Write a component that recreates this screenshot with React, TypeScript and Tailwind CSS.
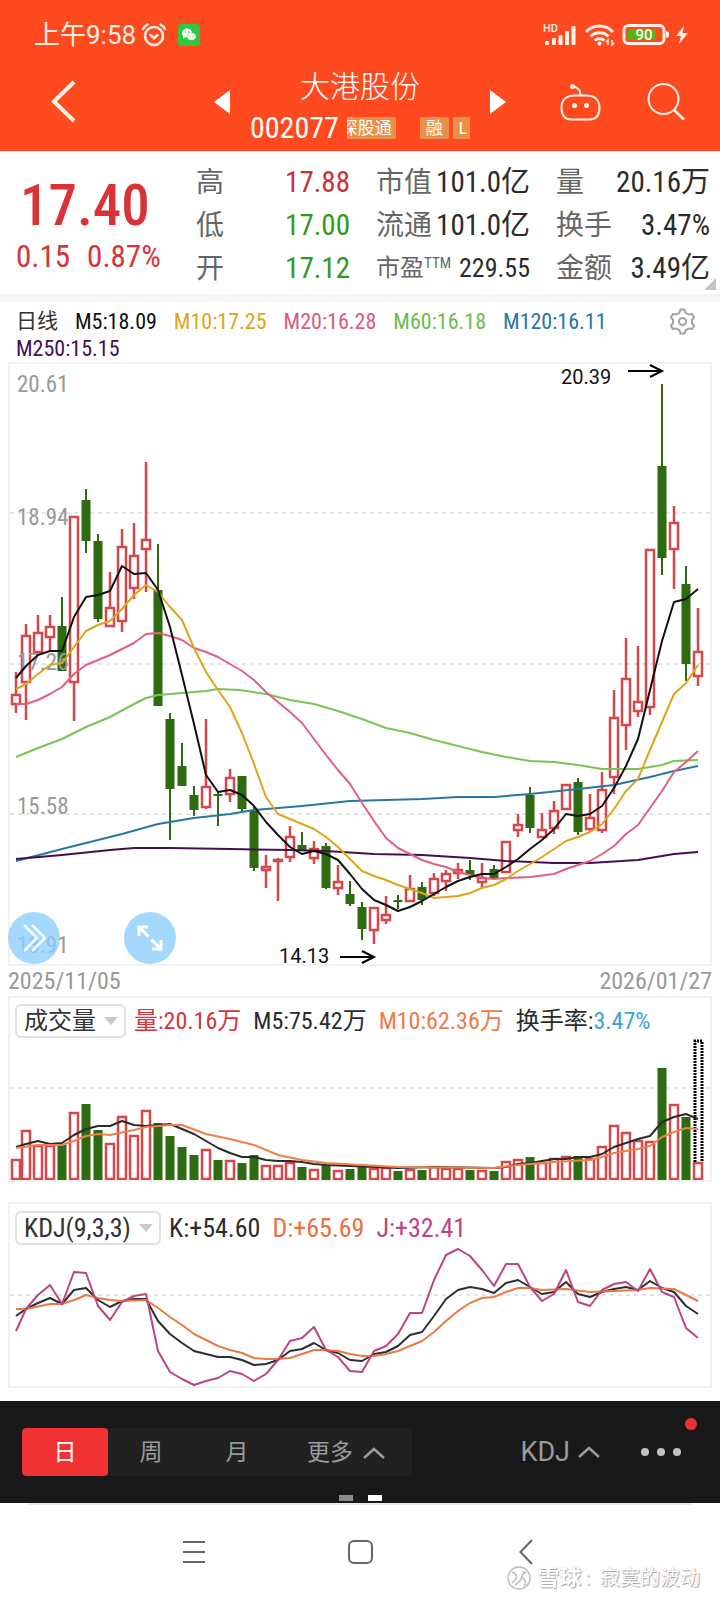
import { useState } from "react";
import type { ReactNode } from "react";

// [rising, high, bodyTop, bodyBottom, low] in chart units
type Candle = [number, number, number, number, number];
// [rising, top] in chart units
type Volume = [number, number];

const RED = "#d6474b";
const GREEN = "#2d6a10";

const CANDLES: Candle[] = [
  [1, 672, 694, 704, 713], [1, 624, 635, 682, 720], [1, 615, 632, 652, 652], [1, 615, 626, 637, 651],
  [0, 597, 626, 671, 671], [1, 516, 516, 682, 721], [0, 489, 500, 541, 553], [0, 534, 541, 619, 622],
  [1, 572, 607, 626, 626], [1, 529, 546, 621, 632], [1, 523, 555, 588, 599], [1, 462, 539, 549, 592],
  [0, 544, 590, 706, 706], [0, 713, 719, 789, 840], [0, 743, 766, 786, 786], [0, 786, 795, 810, 816],
  [1, 719, 786, 807, 809], [0, 791, 794, 796, 826], [1, 769, 777, 794, 802], [0, 776, 776, 809, 812],
  [0, 807, 811, 868, 871], [1, 855, 866, 870, 888], [1, 858, 859, 861, 901], [1, 826, 836, 857, 862],
  [0, 832, 845, 850, 850], [1, 841, 848, 858, 864], [0, 843, 846, 888, 889], [1, 865, 881, 888, 895],
  [0, 881, 894, 904, 906], [0, 902, 907, 929, 940], [1, 907, 907, 930, 944], [1, 896, 914, 920, 924],
  [0, 895, 900, 902, 909], [1, 875, 888, 901, 901], [0, 882, 887, 900, 905], [1, 873, 878, 893, 896],
  [1, 870, 873, 881, 891], [1, 863, 869, 873, 879], [0, 860, 870, 875, 880], [1, 863, 877, 882, 888],
  [0, 865, 869, 878, 879], [1, 841, 841, 872, 872], [1, 814, 824, 830, 837], [0, 787, 795, 828, 833],
  [1, 813, 829, 837, 837], [1, 801, 810, 828, 834], [1, 784, 784, 809, 809], [0, 778, 782, 832, 835],
  [1, 794, 817, 829, 831], [1, 772, 789, 830, 833], [1, 690, 717, 777, 794], [1, 638, 678, 725, 750],
  [1, 646, 701, 711, 717], [1, 549, 549, 707, 715], [0, 384, 466, 558, 575], [1, 506, 522, 549, 589],
  [0, 566, 584, 664, 681], [1, 608, 651, 676, 686],
];

const VOLUMES: Volume[] = [
  [1, 1159], [1, 1130], [1, 1145], [1, 1145], [0, 1145], [1, 1112], [0, 1104], [0, 1130], [1, 1143], [1, 1116],
  [1, 1135], [1, 1110], [0, 1123], [0, 1136], [0, 1147], [0, 1155], [1, 1149], [0, 1160], [1, 1160], [0, 1163],
  [0, 1155], [1, 1165], [1, 1165], [1, 1162], [0, 1167], [1, 1169], [0, 1165], [1, 1170], [0, 1169], [0, 1166],
  [1, 1168], [1, 1167], [0, 1171], [1, 1169], [0, 1170], [1, 1166], [1, 1168], [1, 1168], [0, 1170], [1, 1170],
  [0, 1171], [1, 1161], [1, 1159], [0, 1157], [1, 1162], [1, 1158], [1, 1156], [0, 1156], [1, 1158], [1, 1146],
  [1, 1125], [1, 1132], [1, 1140], [1, 1141], [0, 1068], [1, 1104], [0, 1117], [1, 1162],
];

const MA_LINES = [
  { color: "#7cc358", points: "16,757 38,748 62,739 86,727 110,717 134,704 146,698 158,695 182,693 206,691 218,689 240,690 266,694 290,700 314,704 338,711 362,719 386,728 410,733 434,740 458,746 482,752 506,757 530,761 554,762 578,765 602,769 638,769 662,765 674,761 698,760" },
  { color: "#2a76a5", points: "16,861 62,849 98,840 122,834 158,824 194,818 230,814 254,810 302,806 350,801 386,800 422,799 458,797 494,797 530,794 578,789 614,785 650,777 674,771 698,766" },
  { color: "#44104f", points: "16,859 62,855 110,850 134,848 170,848 230,849 290,850 326,851 374,854 422,855 470,858 506,861 554,863 590,863 638,860 674,854 698,852" },
  { color: "#e2607f", points: "16,704 26,704 38,700 50,694 62,687 74,674 86,665 98,660 110,655 122,649 134,643 146,634 158,633 170,636 182,640 194,648 206,652 218,657 230,664 242,671 254,680 266,692 278,702 290,712 302,723 314,739 326,755 338,770 350,784 362,803 374,821 386,838 398,848 410,854 422,860 434,864 446,867 458,872 470,875 482,878 494,879 506,878 530,877 554,874 566,869 578,865 590,861 602,854 614,846 626,834 638,825 650,808 662,791 674,772 686,762 698,751" },
  { color: "#dda61a", points: "16,689 26,684 38,674 50,665 62,663 74,647 86,631 98,625 110,621 122,609 134,595 146,585 158,592 170,607 182,620 194,648 206,672 218,690 230,707 242,733 254,764 266,797 278,814 290,819 302,824 314,829 326,837 338,847 350,859 362,871 374,876 386,880 398,885 410,889 422,893 434,898 446,897 458,896 470,893 482,888 494,885 506,879 518,871 530,864 542,857 554,849 566,841 578,837 590,832 602,824 614,809 626,791 638,779 650,750 662,722 674,694 686,683 698,665" },
  { color: "#111111", points: "16,678 26,666 38,655 50,651 62,651 74,617 86,597 98,595 110,591 122,566 134,574 146,573 158,590 170,627 182,675 194,724 206,775 218,792 230,790 242,795 254,806 266,822 278,835 290,847 302,854 314,851 326,854 338,860 350,874 362,889 374,900 386,905 398,911 410,907 422,901 434,894 446,887 458,881 470,877 482,874 494,874 506,867 518,859 530,849 542,840 554,829 566,814 578,816 590,814 602,806 614,788 626,766 638,739 650,690 662,641 674,602 686,599 698,589" },
];

const VOLUME_LINES = [
  { color: "#2b2b2b", points: "16,1147 26,1144 38,1141 50,1144 62,1143 74,1135 86,1129 98,1126 110,1126 122,1121 134,1125 146,1126 158,1125 170,1124 182,1129 194,1134 206,1141 218,1148 230,1153 242,1157 254,1157 266,1160 278,1161 290,1161 302,1162 314,1164 326,1165 350,1166 398,1168 434,1167 494,1168 506,1167 518,1164 530,1163 542,1161 554,1159 566,1159 578,1157 590,1157 602,1154 614,1147 626,1143 638,1139 650,1136 662,1122 674,1117 686,1114 698,1119" },
  { color: "#ee8049", points: "16,1148 38,1145 62,1145 74,1141 86,1136 98,1134 110,1135 134,1130 146,1127 158,1126 170,1125 182,1125 206,1134 230,1139 254,1145 278,1155 302,1160 326,1163 362,1165 398,1167 494,1168 518,1165 554,1162 590,1160 602,1157 614,1153 638,1149 650,1146 662,1137 674,1132 686,1128 698,1129" },
];

const KDJ_LINES = [
  { color: "#2c2f31", points: "16,1316 26,1309 38,1303 50,1298 62,1304 74,1290 86,1288 98,1300 110,1307 122,1301 134,1299 146,1299 158,1321 170,1334 182,1343 194,1351 206,1354 218,1357 230,1357 242,1360 254,1365 266,1364 278,1360 290,1351 302,1349 314,1343 326,1350 338,1353 350,1360 362,1361 374,1354 386,1352 398,1346 410,1335 422,1332 434,1316 446,1299 458,1290 470,1287 482,1289 494,1293 506,1283 518,1280 530,1287 542,1294 554,1292 566,1282 578,1294 590,1297 602,1292 614,1289 626,1287 638,1290 650,1281 662,1288 674,1292 686,1306 698,1314" },
  { color: "#ea7b47", points: "16,1309 26,1309 50,1304 62,1304 74,1300 86,1295 98,1298 110,1300 122,1301 146,1300 158,1308 170,1317 182,1325 194,1334 206,1340 218,1346 230,1350 242,1353 254,1358 266,1359 278,1359 290,1358 302,1354 314,1350 326,1350 338,1351 350,1354 362,1356 374,1356 386,1354 398,1351 410,1346 422,1341 434,1332 446,1321 458,1311 470,1303 482,1298 494,1297 506,1292 518,1288 530,1288 542,1290 566,1289 590,1292 614,1291 638,1290 650,1288 674,1289 686,1295 698,1301" },
  { color: "#bd4482", points: "16,1331 26,1309 38,1295 50,1285 62,1304 74,1272 86,1273 98,1306 110,1320 122,1302 134,1296 146,1294 158,1351 170,1372 182,1379 194,1385 206,1381 218,1378 230,1371 242,1374 254,1381 266,1374 278,1360 290,1341 302,1338 314,1327 326,1350 338,1357 350,1371 362,1372 374,1351 386,1346 398,1334 410,1313 422,1313 434,1280 446,1255 458,1249 470,1256 482,1270 494,1286 506,1264 518,1264 530,1287 542,1301 554,1294 566,1270 578,1302 590,1306 602,1290 614,1284 626,1282 638,1291 650,1269 662,1292 674,1297 686,1328 698,1338" },
];

const AXIS_LABELS = [
  { y: 392, text: "20.61" },
  { y: 525, text: "18.94" },
  { y: 670, text: "17.26" },
  { y: 814, text: "15.58" },
  { y: 953, text: "13.91" },
];

const PERIODS = ["日", "周", "月"];

const columnX = (i: number) => (i === 0 ? 16 : 14 + i * 12);

function Lines({ lines }: { lines: { color: string; points: string }[] }) {
  return (
    <g fill="none" strokeWidth="2" strokeLinejoin="round">
      {lines.map((line) => (
        <polyline key={line.color} points={line.points} stroke={line.color} />
      ))}
    </g>
  );
}

function GridLines({ ys }: { ys: number[] }) {
  return (
    <g stroke="#e4e4e4" strokeWidth="2" strokeDasharray="4 4">
      {ys.map((y) => (
        <line key={y} x1="10" x2="710" y1={y} y2={y} />
      ))}
    </g>
  );
}

/* ── Header ── */

function StatusBar() {
  return (
    <div className="flex items-center justify-between pl-[34px] pr-8 pt-[23px] text-[#fff1e6]">
      <div className="flex items-center">
        <span className="font-['Roboto','Noto_Sans_CJK_SC',sans-serif] text-[26px] leading-6">上午9:58</span>
        <svg className="ml-1.5 h-6 w-6" viewBox="0 0 24 24" fill="none" stroke="currentColor" strokeWidth="2.500" strokeLinecap="round">
          <circle cx="12" cy="13" r="9" />
          <path d="M8.5 12l3.5 3 3.5-3" />
          <path d="M1 6c1-2 2.500-3.500 4.500-4.500M23 6c-1-2-2.500-3.500-4.500-4.500" />
        </svg>
        <svg className="ml-3 h-[22px] w-[22px]" viewBox="0 0 22 22">
          <rect width="22" height="22" rx="4" fill="#2bc840" />
          <ellipse cx="9" cy="9" rx="5.200" ry="4.400" fill="#fff" />
          <path d="M5 12l0 2.500 2.500-1.500z" fill="#fff" />
          <ellipse cx="13.500" cy="12.500" rx="4.600" ry="3.800" fill="#fff" stroke="#2bc840" strokeWidth="0.500" />
          <g fill="#2bc840">
            <circle cx="7.500" cy="8" r="0.700" />
            <circle cx="10.800" cy="8" r="0.700" />
            <circle cx="12" cy="11.800" r="0.600" />
            <circle cx="15" cy="11.800" r="0.600" />
          </g>
        </svg>
      </div>

      <div className="flex items-center">
        <svg className="h-6 w-[33px]" viewBox="0 0 33 24" fill="currentColor">
          <text x="0" y="9" fontSize="11" fontWeight="500" fontFamily="Roboto, sans-serif">HD</text>
          <rect x="2" y="18" width="4" height="4" rx="1" />
          <rect x="9" y="15" width="4" height="7" rx="1" />
          <rect x="15.500" y="12" width="4" height="10" rx="1" />
          <rect x="22" y="8" width="4" height="14" rx="1" />
          <rect x="28.500" y="3" width="4" height="19" rx="1" />
        </svg>
        <svg className="ml-2 h-6 w-8" viewBox="0 0 32 24" fill="none" stroke="currentColor" strokeWidth="3">
          <path d="M2 9C9 1 22 1 29 9" />
          <path d="M6.500 13.500C11 8.500 20 8.500 24.500 13.500" />
          <path d="M10.500 17.500C13 15 18 15 20.500 17.500" />
          <circle cx="15.500" cy="20.500" r="2" fill="currentColor" stroke="none" />
          <path d="M24 22v-5l-2 2M28 17v5l2-2" strokeWidth="1.500" />
        </svg>
        <svg className="ml-1.5 h-6 w-[48px]" viewBox="0 0 48 24">
          <rect x="2" y="2.500" width="40" height="18" rx="4.500" fill="none" stroke="currentColor" strokeWidth="3" />
          <rect x="6" y="6" width="28" height="11" fill="#5ab010" />
          <path d="M44 8.500h1.500q1.500 0 1.500 1.500v3q0 1.500-1.500 1.500H44z" fill="currentColor" />
          <text x="22" y="16.500" textAnchor="middle" fontSize="15" fontWeight="500" fontFamily="Roboto, sans-serif" fill="#fff">90</text>
        </svg>
        <svg className="ml-1.5 h-6 w-3" viewBox="0 0 12 24" fill="currentColor">
          <path d="M8 3L0 13h5L3 21l9-11H6.500z" />
        </svg>
      </div>
    </div>
  );
}

function TitleBar() {
  return (
    <div className="grid grid-cols-[1fr_auto_1fr] items-center pb-[7px] pt-3 text-white">
      <button className="justify-self-start pl-[50px]" aria-label="返回">
        <svg className="h-11 w-[26px]" viewBox="0 0 26 44" fill="none" stroke="#fff1e6" strokeWidth="4">
          <path d="M24 2L4 21.500L24 41" />
        </svg>
      </button>

      <div className="flex items-center gap-5">
        <button aria-label="上一只">
          <svg className="h-6 w-4" viewBox="0 0 16 24" fill="currentColor"><path d="M16 0v24L0 12z" /></svg>
        </button>
        <div className="flex w-[220px] flex-col items-center pt-1">
          <h1 className="text-[30px] font-light leading-[48px]">大港股份</h1>
          <div className="flex h-[33px] w-full items-center gap-2">
            <span className="text-[30px] leading-8">002077</span>
            <div className="flex-1 overflow-hidden text-[17px] leading-[22px]">
              {/* tag strip, scrolled a little to the left */}
              <div className="-ml-2.5 flex">
                <span className="shrink-0 rounded-xs bg-[#e8914a] px-1">深股通</span>
                <span className="ml-6 shrink-0 rounded-xs bg-[#e8914a] px-1.5">融</span>
                <span className="ml-1 w-5 shrink-0 rounded-xs bg-[#e8914a] pl-1.5">L</span>
              </div>
            </div>
          </div>
        </div>
        <button aria-label="下一只">
          <svg className="h-6 w-4" viewBox="0 0 16 24" fill="currentColor"><path d="M0 0v24l16-12z" /></svg>
        </button>
      </div>

      <div className="flex items-center justify-end gap-[46px] pr-[35px]">
        <button aria-label="助手">
          <svg className="h-[38px] w-[41px]" viewBox="0 0 41 38" fill="none" stroke="#fff1e6" strokeWidth="2">
            <path d="M14 12.500h13c8 0 12.500 5 12.500 12s-2 12-10 12h-18c-8 0-10-5-10-12s4.500-12 12.500-12z" />
            <path d="M20.500 12c0-5-2-7.500-7-8.500" />
            <circle cx="12.500" cy="3.500" r="2.500" fill="#fff1e6" stroke="none" />
            <circle cx="14.500" cy="22.500" r="2.500" fill="#fff1e6" stroke="none" />
            <circle cx="26.500" cy="22.500" r="2.500" fill="#fff1e6" stroke="none" />
          </svg>
        </button>
        <button aria-label="搜索">
          <svg className="h-[38px] w-[38px]" viewBox="0 0 38 38" fill="none" stroke="#fff1e6" strokeWidth="2">
            <circle cx="16.500" cy="16" r="15" />
            <path d="M27 27l10 9.500" strokeWidth="2.500" />
          </svg>
        </button>
      </div>
    </div>
  );
}

/* ── Quote summary ── */

function Stat({ label, tone = "text-[#2b2b2b]", children }: { label: string; tone?: string; children: ReactNode }) {
  return (
    <div className="flex items-center justify-between whitespace-nowrap">
      <dt className="text-[28px] leading-[43px] text-[#666]">{label}</dt>
      <dd className={`text-[29px] leading-[43px] ${tone}`}>{children}</dd>
    </div>
  );
}

function QuoteSummary() {
  return (
    <section className="relative grid grid-cols-4 gap-x-[26px] pb-1 pl-4 pr-2.5 pt-2.5">
      <div className="whitespace-nowrap text-[#d93337]">
        <p className="pl-1 pt-3 text-[57px] font-medium leading-[66px]">17.40</p>
        <p className="flex gap-[17px] text-[31px] leading-9"><span>0.15</span><span>0.87%</span></p>
      </div>
      <dl>
        <Stat label="高" tone="text-[#cc2f3c]">17.88</Stat>
        <Stat label="低" tone="text-[#2f9a1c]">17.00</Stat>
        <Stat label="开" tone="text-[#2f9a1c]">17.12</Stat>
      </dl>
      <dl>
        <Stat label="市值">101.0亿</Stat>
        <Stat label="流通">101.0亿</Stat>
        <div className="flex items-center justify-between whitespace-nowrap">
          <dt className="flex text-[24px] leading-[43px] text-[#666]">
            市盈<span className="text-[15px] leading-8">TTM</span>
          </dt>
          <dd className="text-[26px] leading-[43px] text-[#2b2b2b]">229.55</dd>
        </div>
      </dl>
      <dl>
        <Stat label="量">20.16万</Stat>
        <Stat label="换手">3.47%</Stat>
        <Stat label="金额">3.49亿</Stat>
      </dl>
      <svg className="absolute bottom-1 right-1 h-3 w-3" viewBox="0 0 12 12"><path d="M12 0v12H0z" fill="#c4c4c4" /></svg>
    </section>
  );
}

/* ── Charts ── */

function MaLegend() {
  return (
    <div className="flex items-start justify-between pl-4 pr-6 pt-1.5 text-[22px] leading-[27px]">
      <ul className="flex flex-1 flex-wrap gap-x-[17px]">
        <li className="text-[21px] text-[#333]">日线</li>
        <li className="text-[#111]">M5:18.09</li>
        <li className="text-[#dda61a]">M10:17.25</li>
        <li className="text-[#dc5a78]">M20:16.28</li>
        <li className="text-[#6dbb4c]">M60:16.18</li>
        <li className="text-[#2a76a5]">M120:16.11</li>
        <li className="text-[#44104f]">M250:15.15</li>
      </ul>
      <button aria-label="设置">
        <svg className="h-[27px] w-[27px]" viewBox="0 0 27 27" fill="none" stroke="#a3a3a3" strokeWidth="2" strokeLinejoin="round">
          <path d="M11.500 1.500h4l1.200 3.300 2.900 1.700 3.500-.6 2 3.400-2.200 2.700v3l2.200 2.700-2 3.400-3.500-.6-2.900 1.700-1.200 3.300h-4l-1.200-3.300-2.900-1.700-3.500.6-2-3.400 2.200-2.700v-3L1.900 9.300l2-3.400 3.500.6 2.900-1.700z" />
          <circle cx="13.500" cy="13.500" r="3.500" />
        </svg>
      </button>
    </div>
  );
}

function CandleChart() {
  return (
    <div className="relative mx-2 border-2 border-[#f1f1f1]">
      <svg className="block h-auto w-full overflow-visible" viewBox="10 364 700 600">
        <GridLines ys={[513, 664, 814]} />
        {CANDLES.map(([up, high, top, bottom, low], i) => {
          const x = columnX(i);
          if (!up) {
            return (
              <g key={i} fill={GREEN}>
                <rect x={x - 1} y={high} width="2" height={low - high} />
                <rect x={x - 4.5} y={top} width="9" height={bottom - top} />
              </g>
            );
          }
          return (
            <g key={i} stroke={RED} strokeWidth="2.5" fill="none">
              <path d={`M${x} ${high}V${top}M${x} ${bottom}V${low}`} />
              <rect x={x - 4} y={top + 1} width="8" height={Math.max(bottom - top - 1, 1)} />
            </g>
          );
        })}
        <g fill="#999" fontSize="23" fontFamily="Roboto Condensed, sans-serif">
          {AXIS_LABELS.map((label) => (
            <text key={label.text} x="17" y={label.y}>{label.text}</text>
          ))}
        </g>
        <Lines lines={MA_LINES} />
        <g fontSize="20" fill="#111" fontFamily="Roboto, sans-serif">
          <text x="561" y="384">20.39</text>
          <text x="279" y="963">14.13</text>
        </g>
        <path d="M628 371H661M650 365L662 371L650 377M340 957H373M362 951L374 957L362 963" fill="none" stroke="#000" strokeWidth="2" />
      </svg>

      <button className="absolute bottom-0 -left-0.5 flex h-[52px] w-[52px] items-center justify-center rounded-full bg-[#8dcffd]/80" aria-label="展开">
        <svg className="h-8 w-7" viewBox="0 0 28 32" fill="none" stroke="#f2faff" strokeWidth="2.500">
          <path d="M4 3L17 16L4 29M12 3L25 16L12 29" />
        </svg>
      </button>
      <button className="absolute bottom-0 left-[114px] flex h-[52px] w-[52px] items-center justify-center rounded-full bg-[#8dcffd]/80" aria-label="全屏">
        <svg className="h-7 w-7" viewBox="0 0 28 28" fill="none" stroke="#fff" strokeWidth="3">
          <path d="M12 3H3V12M3 3L12.500 12.500M16 25H25V16M25 25L15.500 15.500" />
        </svg>
      </button>
    </div>
  );
}

function IndicatorSelect({ label, options }: { label: string; options: string[] }) {
  const [value, setValue] = useState(options[0]);
  return (
    <div className="relative">
      <select
        aria-label={label}
        value={value}
        onChange={(e) => setValue(e.target.value)}
        className="block h-[34px] appearance-none rounded-md border-2 border-[#e0e0e0] bg-white pl-[7px] pr-7 leading-[30px] text-[#333]"
      >
        {options.map((option) => (
          <option key={option}>{option}</option>
        ))}
      </select>
      <svg className="pointer-events-none absolute right-2 top-[13px] h-2 w-[14px]" viewBox="0 0 14 8"><path d="M0 0h14L7 8z" fill="#c8c8c8" /></svg>
    </div>
  );
}

function VolumeChart() {
  return (
    <div className="mx-2 border-2 border-[#f1f1f1]">
      <div className="flex items-center whitespace-nowrap pl-[5px] pt-1.5 text-[24px] leading-[34px] text-[#2b2b2b]">
        <IndicatorSelect label="成交指标" options={["成交量", "成交额"]} />
        <span className="ml-2 text-[#d6343c]">量:20.16万</span>
        <span className="ml-3">M5:75.42万</span>
        <span className="ml-3 text-[#ee7a48]">M10:62.36万</span>
        <span className="ml-3">换手率:<span className="text-[#3ba3d8]">3.47%</span></span>
      </div>
      <svg className="block h-auto w-full" viewBox="10 1038 700 142">
        <GridLines ys={[1088]} />
        {VOLUMES.map(([up, top], i) => {
          const x = columnX(i);
          return up ? (
            <rect key={i} x={x - 4} y={top + 1} width="8" height={1178 - top} fill="#fff" stroke={RED} strokeWidth="2.5" />
          ) : (
            <rect key={i} x={x - 4.5} y={top} width="9" height={1180 - top} fill={GREEN} />
          );
        })}
        <path d="M695 1162V1041H702V1162" fill="none" stroke="#000" strokeWidth="3" strokeDasharray="2 1" />
        <Lines lines={VOLUME_LINES} />
      </svg>
    </div>
  );
}

function KdjChart() {
  return (
    <div className="mx-2 mt-5 border-2 border-[#f1f1f1]">
      <div className="flex items-center whitespace-nowrap pl-[5px] pt-[7px] text-[26px] leading-[34px]">
        <IndicatorSelect label="技术指标" options={["KDJ(9,3,3)", "MACD", "RSI"]} />
        <span className="ml-2 text-[#2b2b2b]">K:+54.60</span>
        <span className="ml-3 text-[#e9703f]">D:+65.69</span>
        <span className="ml-3 text-[#bd4482]">J:+32.41</span>
      </div>
      <svg className="block h-auto w-full" viewBox="10 1245 700 141">
        <GridLines ys={[1295]} />
        <Lines lines={KDJ_LINES} />
      </svg>
    </div>
  );
}

/* ── Footer ── */

function Caret() {
  return (
    <svg className="h-3 w-[22px]" viewBox="0 0 22 12" fill="none" stroke="currentColor" strokeWidth="2.500">
      <path d="M1 11L11 2L21 11" />
    </svg>
  );
}

function PeriodBar() {
  const [period, setPeriod] = useState("日");
  return (
    <div className="bg-[#191919] pb-0.5 pt-[27px] text-[23px] text-[#9b9b9b]">
      <div className="flex items-center justify-between pl-[22px] pr-[38px]">
        <div className="flex h-12 overflow-hidden rounded-sm bg-[#212121]">
          {PERIODS.map((name) => (
            <button
              key={name}
              onClick={() => setPeriod(name)}
              className={name === period ? "w-[86px] rounded-sm bg-[#f03232] pt-0.5 text-white" : "w-[86px] pt-0.5"}
            >
              {name}
            </button>
          ))}
          <button className="flex w-[132px] items-center justify-center gap-2.5 pt-0.5">更多<Caret /></button>
        </div>
        <div className="flex items-center gap-10">
          <button className="flex items-center gap-2 font-['Roboto',sans-serif] text-[27px]">KDJ<Caret /></button>
          <button className="relative" aria-label="更多功能">
            <svg className="h-12 w-[42px]" viewBox="0 0 42 48" fill="#c0c0c0">
              <circle cx="5" cy="24" r="4" />
              <circle cx="21" cy="24" r="4" />
              <circle cx="37" cy="24" r="4" />
            </svg>
            <span className="absolute -right-[15px] -top-2.5 h-3 w-3 rounded-full bg-[#f03232]" />
          </button>
        </div>
      </div>
      <div className="mt-[19px] flex justify-center gap-[15px]">
        <span className="h-1.5 w-[14px] bg-[#8c8c8c]" />
        <span className="h-1.5 w-[14px] bg-white" />
      </div>
    </div>
  );
}

function SystemNav() {
  return (
    <div className="bg-white">
      <div className="mx-7 h-0.5 bg-[#f0eaef]" />
      <nav className="mx-auto grid w-[69%] grid-cols-3 justify-items-center pt-[34px] text-[#666]">
        <button aria-label="任务">
          <svg className="h-[26px] w-6" viewBox="0 0 24 26" stroke="currentColor" strokeWidth="2"><path d="M1 3h22M1 13h22M1 23h22" /></svg>
        </button>
        <button aria-label="主页">
          <svg className="h-[26px] w-[26px]" viewBox="0 0 26 26" fill="none" stroke="currentColor" strokeWidth="2"><rect x="2" y="2" width="23" height="22" rx="5" /></svg>
        </button>
        <button aria-label="后退">
          <svg className="h-[26px] w-[14px]" viewBox="0 0 14 26" fill="none" stroke="currentColor" strokeWidth="2"><path d="M13 1L1.500 13L13 25" /></svg>
        </button>
      </nav>
      <p className="flex items-center justify-end pb-2 pr-5 text-[20px] leading-[26px] text-white [text-shadow:1px_1px_1px_#a3a3a3,0_0_1px_#bbb]">
        <svg className="mr-1.5 h-6 w-6" viewBox="0 0 24 24" fill="none" stroke="#bdbdbd" strokeWidth="1.500">
          <circle cx="12" cy="12" r="11" />
          <path d="M5 6c5 2 6 5 3 8l-3 3M19 6c-4 2-5 4-3 6s4 5 1 8M8 19c6-3 7-8 9-14" />
        </svg>
        <span className="text-[22px] font-bold">雪球</span>
        <span className="ml-1 mr-2.5">:</span>
        寂寞的波动
      </p>
    </div>
  );
}

export default function App() {
  return (
    <main className="w-full bg-white font-['Roboto_Condensed','Noto_Sans_CJK_SC',sans-serif]">
      <header className="bg-[#ff4a20]">
        <StatusBar />
        <TitleBar />
      </header>
      <QuoteSummary />
      <div className="h-2 bg-[#f5f5f5]" />
      <MaLegend />
      <CandleChart />
      <div className="flex justify-between px-2 text-[24px] leading-[30px] text-[#999]">
        <time>2025/11/05</time>
        <time>2026/01/27</time>
      </div>
      <VolumeChart />
      <KdjChart />
      <div className="h-[13px]" />
      <PeriodBar />
      <SystemNav />
    </main>
  );
}
